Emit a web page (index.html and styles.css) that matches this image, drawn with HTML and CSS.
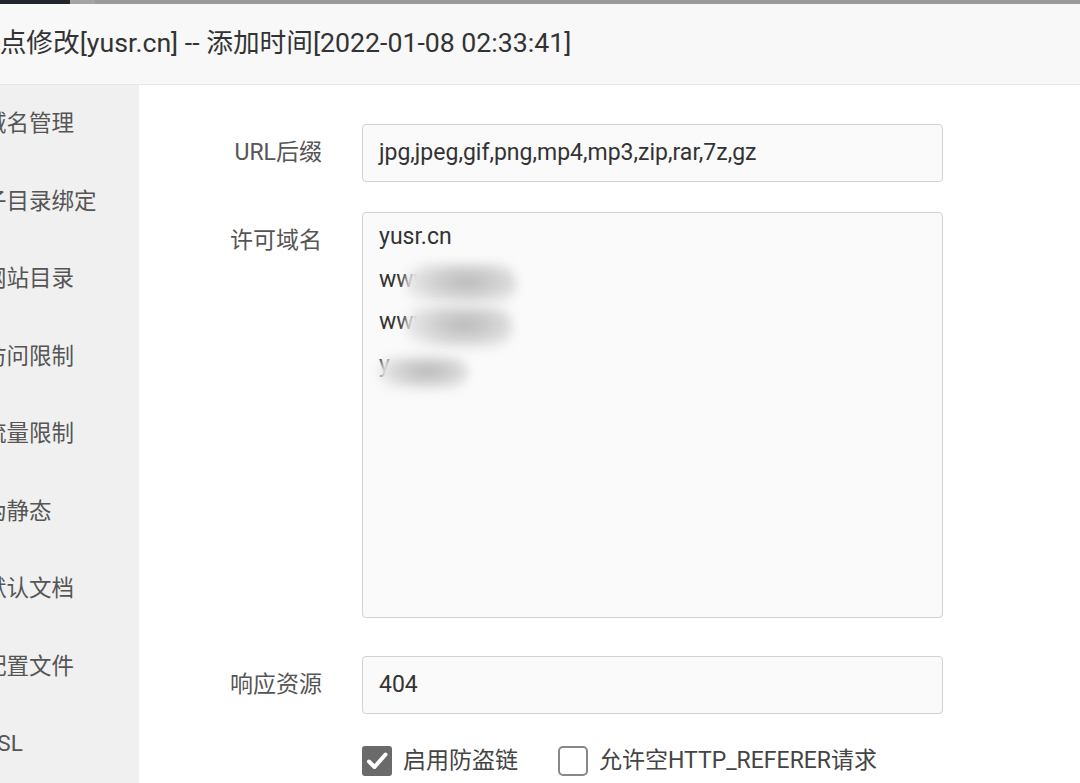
FILE: index.html
```html
<!DOCTYPE html>
<html lang="zh-CN">
<head>
    <meta charset="UTF-8">
    <meta name="viewport" content="width=device-width, initial-scale=1.0">
    <title>站点修改</title>
    <link rel="stylesheet" href="styles.css">
</head>
<body>
    <div class="topbar">
        <div class="topbar-dark"></div>
        <div class="topbar-mid"></div>
    </div>
    <div class="dialog">
        <div class="dialog-title">站点修改[yusr.cn] -- 添加时间[2022-01-08 02:33:41]</div>
        <div class="dialog-body">
            <ul class="side-menu">
                <li>域名管理</li>
                <li>子目录绑定</li>
                <li>网站目录</li>
                <li>访问限制</li>
                <li>流量限制</li>
                <li>伪静态</li>
                <li>默认文档</li>
                <li>配置文件</li>
                <li>SSL</li>
            </ul>
            <form class="form">
                <div class="row">
                    <label class="row-label">URL后缀</label>
                    <div class="input">jpg,jpeg,gif,png,mp4,mp3,zip,rar,7z,gz</div>
                </div>
                <div class="row">
                    <label class="row-label area-label">许可域名</label>
                    <div class="input textarea">
                        <div class="line">yusr.cn</div>
                        <div class="line">www<span class="smudge smudge-a"></span></div>
                        <div class="line">www<span class="smudge smudge-b"></span></div>
                        <div class="line">y<span class="smudge smudge-c"></span></div>
                    </div>
                </div>
                <div class="row row-gap">
                    <label class="row-label">响应资源</label>
                    <div class="input">404</div>
                </div>
                <div class="row checks">
                    <span class="check-item"><span class="box checked"><svg viewBox="0 0 30 30" width="30" height="30"><path d="M7 15.5l5.5 5.5L23.5 8.5" fill="none" stroke="#fff" stroke-width="4" stroke-linecap="round" stroke-linejoin="round"/></svg></span>启用防盗链</span>
                    <span class="check-item"><span class="box"></span>允许空HTTP_REFERER请求</span>
                </div>
            </form>
        </div>
    </div>
</body>
</html>
```

FILE: styles.css
```css
html, body {
    margin: 0;
    padding: 0;
    height: 100%;
    overflow: hidden;
}
body {
    font-family: Roboto, "Noto Sans CJK SC", sans-serif;
    background: #fff;
    color: #333;
}
.topbar {
    display: flex;
    height: 4px;
    background: #9a9a9a;
}
.topbar-dark {
    width: 70px;
    background: #22262b;
}
.topbar-mid {
    width: 25px;
    background: #a4a4a4;
}
.dialog {
    margin-left: -40px;
    height: 779px;
    display: flex;
    flex-direction: column;
}
.dialog-title {
    flex-shrink: 0;
    height: 80px;
    line-height: 78px;
    padding-left: 13px;
    background: #f8f8f8;
    border-bottom: 1px solid #e6e6e6;
    font-size: 26.7px;
    color: #333;
    white-space: nowrap;
}
.dialog-body {
    flex: 1;
    display: flex;
}
.side-menu {
    list-style: none;
    margin: 0;
    padding: 0;
    width: 179px;
    background: #f0f0f0;
}
.side-menu li {
    height: 77.5px;
    line-height: 77.5px;
    padding-left: 24px;
    font-size: 22.5px;
    color: #555;
    white-space: nowrap;
}
.form {
    padding-top: 39px;
    padding-left: 40px;
}
.row {
    display: flex;
    align-items: flex-start;
    margin-bottom: 30px;
}
.row-label {
    width: 143px;
    text-align: right;
    padding-right: 40px;
    font-size: 23px;
    line-height: 57px;
    color: #555;
}
.area-label {
    line-height: 58px;
}
.input {
    box-sizing: border-box;
    width: 581px;
    height: 58px;
    line-height: 56px;
    padding: 0 16px;
    border: 1px solid #d2d2d2;
    border-radius: 4px;
    background: #fafafa;
    font-size: 23px;
    color: #333;
}
.textarea {
    height: 406px;
    line-height: 42.7px;
    padding-top: 3px;
}
.line {
    height: 42.7px;
    white-space: nowrap;
}
.row-gap {
    margin-top: 38px;
}
.smudge {
    display: inline-block;
    border-radius: 22px;
    background: radial-gradient(ellipse at 55% 45%, #b9b9b9 0%, #d6d6d6 45%, #f4f4f4 80%);
    filter: blur(5px);
}
.smudge-a {
    width: 112px;
    height: 42px;
    margin-left: -26px;
    vertical-align: -18px;
}
.smudge-b {
    width: 108px;
    height: 44px;
    margin-left: -26px;
    vertical-align: -20px;
}
.smudge-c {
    width: 90px;
    height: 34px;
    margin-left: -12px;
    vertical-align: -18px;
}
.checks {
    margin-top: 32px;
    padding-left: 183px;
    gap: 40px;
    font-size: 23px;
    color: #444;
}
.check-item {
    display: flex;
    align-items: center;
    gap: 11px;
    line-height: 30px;
}
.box {
    box-sizing: border-box;
    width: 30px;
    height: 30px;
    border: 2px solid #888;
    border-radius: 5px;
    background: #fff;
    display: flex;
}
.box.checked {
    border: none;
    background: #6a6a6a;
    border-radius: 3px;
}
```
